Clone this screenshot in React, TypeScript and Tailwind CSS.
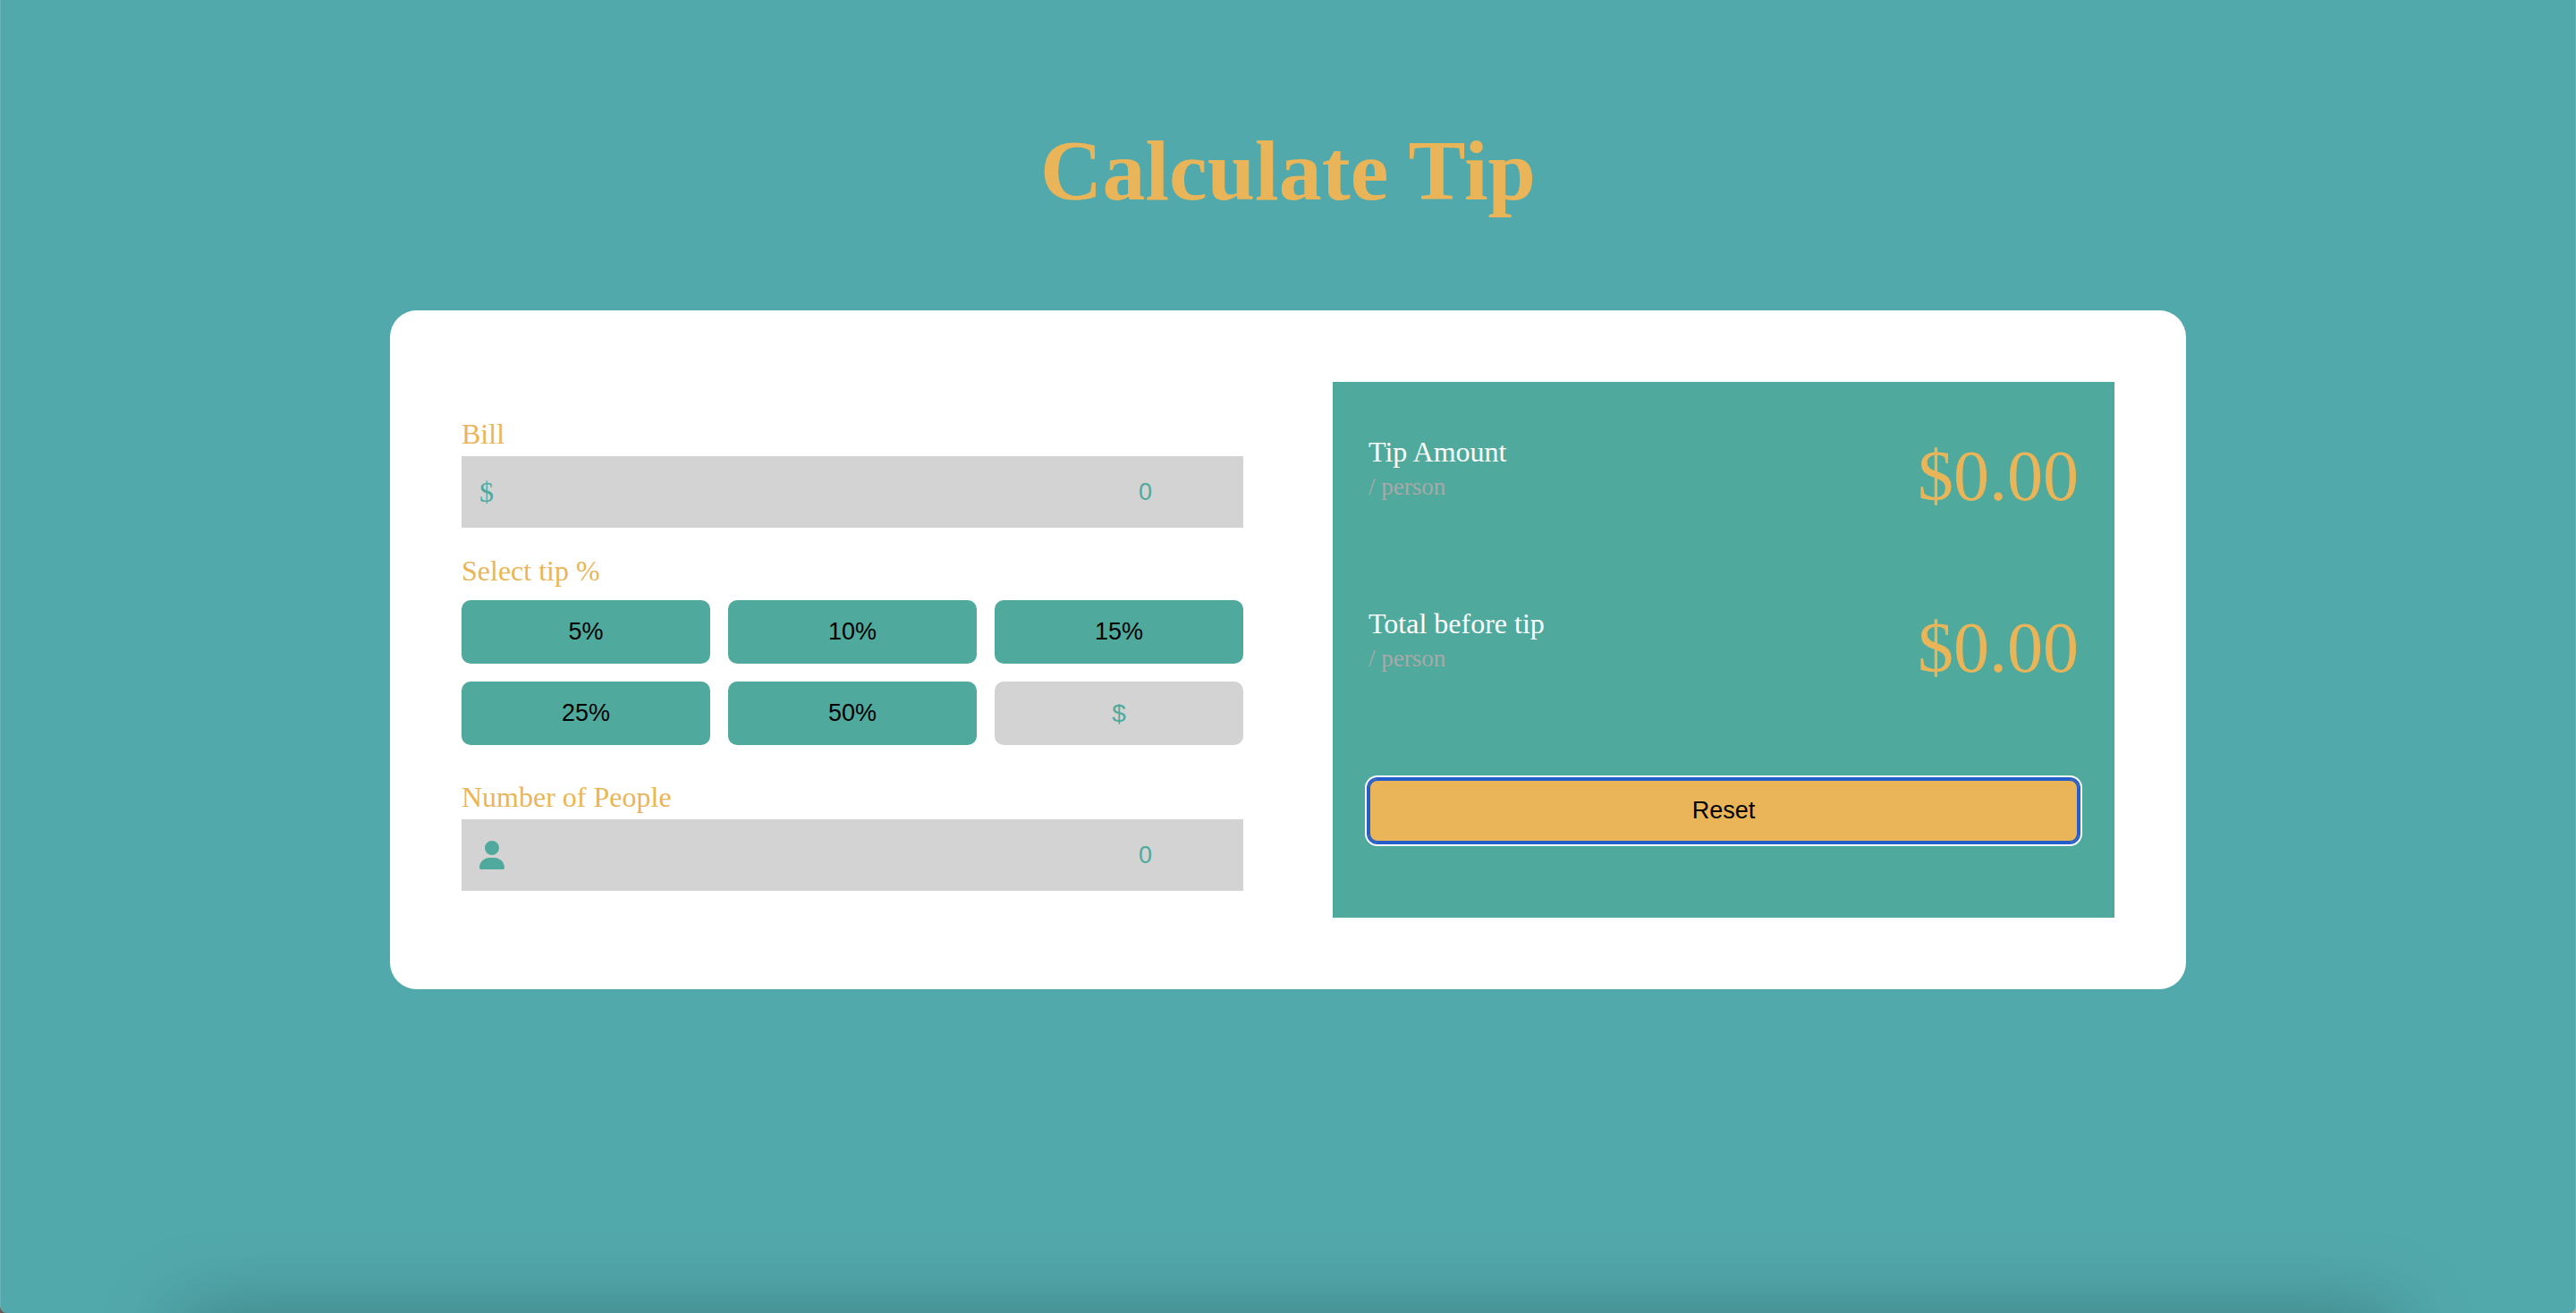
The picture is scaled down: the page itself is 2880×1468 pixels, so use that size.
import { useState } from "react";
import type { ReactNode } from "react";
import { FaUser } from "react-icons/fa6";

const TIP_OPTIONS = [5, 10, 15, 25, 50];

const sans = "font-['Liberation_Sans',Arial,sans-serif]";

type NumberFieldProps = {
  id: string;
  label: string;
  icon: ReactNode;
  value: string;
  onChange: (value: string) => void;
};

function NumberField({ id, label, icon, value, onChange }: NumberFieldProps) {
  return (
    <div className="flex flex-col gap-[7px]">
      <label htmlFor={id} className="text-[32px] leading-[36px] text-[#eab558]">
        {label}
      </label>
      <div className="flex h-20 items-center bg-[#d3d3d3] pl-5 text-[#4faa9d]">
        <span className="text-[32px] leading-[36px]">{icon}</span>
        <input
          id={id}
          inputMode="numeric"
          placeholder="0"
          value={value}
          onChange={(e) => onChange(e.target.value)}
          className={`${sans} h-full min-w-0 flex-1 bg-transparent pr-[102px] text-right text-[27px] outline-none placeholder:text-[#4faa9d]`}
        />
      </div>
    </div>
  );
}

function ResultRow({ label, amount }: { label: string; amount: number }) {
  return (
    <div className="flex justify-between">
      <div className="flex flex-col gap-[6px]">
        <p className="text-[32px] leading-[36px] text-white">{label}</p>
        <p className="text-[27px] leading-[30px] text-[#a9a9a9]">/ person</p>
      </div>
      <output className="text-[80px] leading-[90px] text-[#eab558]">
        ${amount.toFixed(2)}
      </output>
    </div>
  );
}

export default function App() {
  const [bill, setBill] = useState("");
  const [people, setPeople] = useState("");
  const [tip, setTip] = useState(0);
  const [custom, setCustom] = useState("");

  const billValue = Number(bill) || 0;
  const peopleValue = Number(people) || 0;
  const tipTotal = custom ? Number(custom) || 0 : (billValue * tip) / 100;
  const perPerson = (total: number) => (peopleValue > 0 ? total / peopleValue : 0);

  const reset = () => {
    setBill("");
    setPeople("");
    setTip(0);
    setCustom("");
  };

  return (
    <div className="bg-linear-to-r from-[#6b5a55] to-[#c0a890]">
      <div className="relative flex min-h-screen flex-col items-center gap-[102px] overflow-hidden rounded-b-[8px] border-x border-[#68b3b5] bg-[#52a9ac] pt-[137px] font-['Liberation_Serif','Times_New_Roman',serif]">
        <h1 className="text-[96px] leading-[108px] font-bold text-[#eab558]">Calculate Tip</h1>

        <main className="grid w-full max-w-[2008px] grid-cols-2 gap-[100px] rounded-[30px] bg-white p-20">
          <form className="flex flex-col pt-10" onSubmit={(e) => e.preventDefault()}>
            <NumberField id="bill" label="Bill" icon="$" value={bill} onChange={setBill} />

            <fieldset className="mt-[30px] mb-10">
              <legend className="mb-[15px] text-[32px] leading-[36px] text-[#eab558]">
                Select tip %
              </legend>
              <div className="grid grid-cols-3 gap-5">
                {TIP_OPTIONS.map((option) => (
                  <button
                    key={option}
                    type="button"
                    onClick={() => setTip(option)}
                    className={`${sans} h-[71px] rounded-[10px] bg-[#4faa9d] text-[27px] text-black`}
                  >
                    {option}%
                  </button>
                ))}
                <input
                  aria-label="Custom tip"
                  placeholder="$"
                  value={custom}
                  onChange={(e) => setCustom(e.target.value)}
                  className={`${sans} h-[71px] w-full rounded-[10px] bg-[#d3d3d3] text-center text-[28px] text-[#4faa9d] outline-none placeholder:text-[#4faa9d]`}
                />
              </div>
            </fieldset>

            <NumberField
              id="people"
              label="Number of People"
              icon={<FaUser className="h-8 w-7" />}
              value={people}
              onChange={setPeople}
            />
          </form>

          <section className="flex flex-col gap-[102px] bg-[#4faa9d] px-10 pt-[60px] pb-[84px]">
            <ResultRow label="Tip Amount" amount={perPerson(tipTotal)} />
            <ResultRow label="Total before tip" amount={perPerson(billValue)} />
            <button
              type="button"
              onClick={reset}
              className={`${sans} h-[71px] rounded-[10px] bg-[#eab558] text-[27px] text-black shadow-[inset_0_0_0_2px_#245fc9,0_0_0_2px_#245fc9,0_0_0_4px_#ffffff]`}
            >
              Reset
            </button>
          </section>
        </main>

        {/* soft shade along the bottom edge of the page */}
        <div className="pointer-events-none absolute inset-x-[200px] top-full h-40 shadow-[0_0_90px_0_rgba(0,0,0,0.25)]" />
      </div>
    </div>
  );
}
